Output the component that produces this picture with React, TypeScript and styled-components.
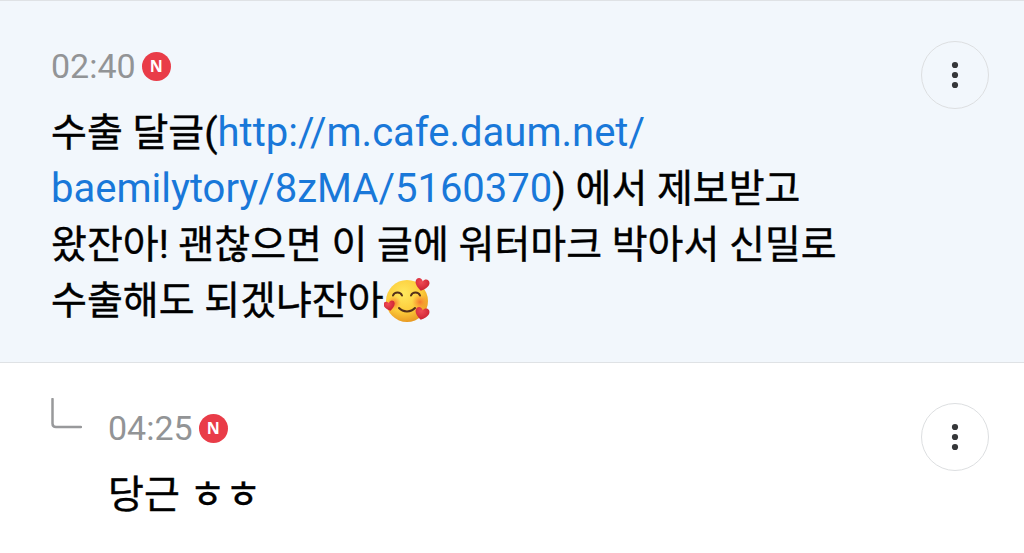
import React from "react";
import styled, { createGlobalStyle } from "styled-components";

const GlobalStyle = createGlobalStyle`
  * { box-sizing: border-box; }
  body {
    margin: 0;
    background: #ffffff;
    color: #000000;
    font-family: Roboto, "Noto Sans CJK KR", sans-serif;
  }
`;

const CommentList = styled.ul`
  list-style: none;
  margin: 0;
  padding: 0;
`;

const CommentRow = styled.li<{ $highlighted?: boolean }>`
  display: flex;
  align-items: flex-start;
  padding: 40px 35px ${(p) => (p.$highlighted ? 33 : 24)}px 51px;
  border-top: 1px solid #dfe2e5;
  background: ${(p) => (p.$highlighted ? "#f2f7fc" : "#ffffff")};
`;

const ReplyMark = styled.svg`
  flex: none;
  width: 31px;
  height: 31px;
  margin: -5px 26px 0 0;
`;

const CommentBody = styled.div`
  flex: 1;
  min-width: 0;
`;

const Meta = styled.div`
  display: flex;
  align-items: center;
  gap: 6px;
  height: 50px;
`;

const Time = styled.time`
  color: #929496;
  font-size: 34px;
  line-height: 40px;
`;

const NewBadge = styled.span`
  display: flex;
  align-items: center;
  justify-content: center;
  width: 29px;
  height: 29px;
  border-radius: 50%;
  background: #e93c48;
  color: #ffffff;
  font: 700 16px/29px "Open Sans", sans-serif;
`;

const Message = styled.p`
  margin: 14px 0 0;
  font-size: 39px;
  line-height: 56px;
  word-break: keep-all;
  -webkit-text-stroke: 0.4px currentColor;
`;

const MessageLink = styled.a`
  color: #1978d9;
  font-size: 40px;
  text-decoration: none;
  -webkit-text-stroke: 0;
`;

const Emoji = styled.svg`
  width: 47px;
  height: 46px;
  vertical-align: -9px;
`;

const MoreButton = styled.button`
  flex: none;
  display: flex;
  align-items: center;
  justify-content: center;
  width: 68px;
  height: 68px;
  margin-left: 24px;
  padding: 0;
  border: 1px solid #dddfe1;
  border-radius: 50%;
  background: transparent;
  cursor: pointer;
`;

function More() {
  return (
    <MoreButton type="button" aria-label="더보기">
      <svg width="8" height="28" viewBox="0 0 8 28" fill="#353739" aria-hidden="true">
        <circle cx="4" cy="4" r="3.1" />
        <circle cx="4" cy="14" r="3.1" />
        <circle cx="4" cy="24" r="3.1" />
      </svg>
    </MoreButton>
  );
}

function CommentMeta({ time }: { time: string }) {
  return (
    <Meta>
      <Time>{time}</Time>
      <NewBadge>N</NewBadge>
    </Meta>
  );
}

function SmilingHearts() {
  const heart = "M0 6C-3 4-7 1-7-2.500C-7-7-1.500-7.500 0-3.500C1.500-7.500 7-7 7-2.500C7 1 3 4 0 6Z";
  return (
    <Emoji viewBox="0 0 47 46" role="img" aria-label="하트와 함께 웃는 얼굴">
      <defs>
        <radialGradient id="face" cx="42%" cy="32%" r="68%">
          <stop offset="0" stopColor="#ffe85e" />
          <stop offset="0.65" stopColor="#fccb3a" />
          <stop offset="1" stopColor="#e99b24" />
        </radialGradient>
        <radialGradient id="blush">
          <stop offset="0" stopColor="#f4682c" stopOpacity="0.85" />
          <stop offset="1" stopColor="#f98630" stopOpacity="0" />
        </radialGradient>
        <radialGradient id="heart" cx="40%" cy="30%" r="70%">
          <stop offset="0" stopColor="#f04a55" />
          <stop offset="1" stopColor="#c9202f" />
        </radialGradient>
      </defs>
      <circle cx="23" cy="24" r="21" fill="url(#face)" />
      <circle cx="10" cy="26" r="7" fill="url(#blush)" />
      <circle cx="36" cy="25" r="8" fill="url(#blush)" />
      <g fill="none" stroke="#54301a" strokeWidth="2" strokeLinecap="round">
        <path d="M9 18.500C10.500 14.500 16.500 14.500 18 18.500" />
        <path d="M27 18.500C28.500 14.500 34.500 14.500 36 18.500" />
        <path d="M15 31C19 35.500 27 35.500 31 31" />
      </g>
      <g fill="url(#heart)">
        <path transform="translate(38 8) rotate(12)" d={heart} />
        <path transform="translate(5.500 29) rotate(-12) scale(0.8)" d={heart} />
        <path transform="translate(38 37) rotate(12)" d={heart} />
      </g>
    </Emoji>
  );
}

export default function App() {
  return (
    <>
      <GlobalStyle />
      <CommentList>
        <CommentRow $highlighted>
          <CommentBody>
            <CommentMeta time="02:40" />
            <Message>
              수출 달글(
              <MessageLink href="http://m.cafe.daum.net/baemilytory/8zMA/5160370">
                http://m.cafe.daum.net/<wbr />baemilytory/8zMA/5160370
              </MessageLink>
              ) 에서 제보받고 왔잔아! 괜찮으면 이 글에 워터마크 박아서 신밀로 수출해도 되겠냐잔아
              <SmilingHearts />
            </Message>
          </CommentBody>
          <More />
        </CommentRow>
        <CommentRow>
          <ReplyMark viewBox="0 0 31 31" fill="none" stroke="#98999b" strokeWidth="2.500" aria-hidden="true">
            <path d="M1.500 1V25.500Q1.500 29 5 29H30" strokeLinecap="round" />
          </ReplyMark>
          <CommentBody>
            <CommentMeta time="04:25" />
            <Message>당근 ㅎㅎ</Message>
          </CommentBody>
          <More />
        </CommentRow>
      </CommentList>
    </>
  );
}
